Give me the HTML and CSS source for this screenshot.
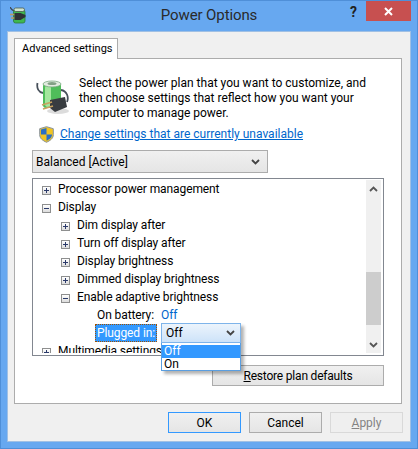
FILE: index.html
```html
<!DOCTYPE html>
<html lang="en">
  <head>
    <meta charset="UTF-8" />
    <meta name="viewport" content="width=device-width, initial-scale=1.0" />
    <title>Power Options</title>
    <link rel="stylesheet" href="styles.css">
  </head>
  <body>
    <div class="window">
      <div class="titlebar">
        <svg class="title-icon" width="17" height="18" viewBox="0 0 17 18">
          <path d="M0 0c1 2 2 3 4 4" fill="none" stroke="#3c4650" stroke-width="1.200" />
          <rect x="3.500" y="3" width="11.500" height="13" rx="2" fill="#3fb84f" stroke="#2f7a3c" stroke-width="0.800" />
          <rect x="4" y="1" width="10.500" height="3.500" rx="1.700" fill="#cfe3cf" stroke="#4a5a4c" stroke-width="0.800" />
          <path d="M0 7.500h5M1 11h4" stroke="#b79a62" stroke-width="1.400" />
          <path d="M4.500 6h6l5 2v2l-5 3h-6z" fill="#2e3236" />
        </svg>
        <span class="title-text">Power Options</span>
        <span class="help">?</span>
        <div class="close">
          <svg width="9" height="9" viewBox="0 0 9 9"><path d="M1 1l7 7M8 1l-7 7" stroke="#fff" stroke-width="2" /></svg>
        </div>
      </div>

      <div class="client">
        <div class="tab">Advanced settings</div>
        <div class="panel">
          <div class="intro">
            <svg class="battery" width="34" height="36" viewBox="0 0 34 36">
              <ellipse cx="22" cy="32" rx="11" ry="3" fill="#dcdcdc" />
              <path d="M1.500 4c-1 5 1 9 5.500 10M25 11c6 1 8 7 6 12" fill="none" stroke="#47505a" stroke-width="1.800" />
              <rect x="7" y="4" width="18" height="25" rx="3" fill="#4fbd5a" />
              <rect x="9" y="6" width="6" height="22" rx="3" fill="#a3e69d" />
              <ellipse cx="16" cy="5" rx="9" ry="3" fill="#e3ebe0" stroke="#7ba881" stroke-width="0.800" />
              <ellipse cx="16" cy="4.500" rx="4.500" ry="1.600" fill="#83a085" />
              <path d="M14 21l15-3 2 10-12 5-5-4z" fill="#383c40" />
              <path d="M6 26l10-3M7 30l10-3" stroke="#c9a25e" stroke-width="1.800" />
            </svg>
            <p class="intro-text">Select the power plan that you want to customize, and then choose settings that reflect how you want your computer to manage power.</p>
          </div>

          <div class="change">
            <svg width="15" height="17" viewBox="0 0 15 17">
              <path d="M7.500.7l6.800 2v6c0 3.700-3 5.800-6.800 7.600C3.700 14.500.7 12.400.7 8.700v-6z" fill="#f2c522" stroke="#8792a0" />
              <path d="M7.500 2v6.500h-5.500V3.400zM7.500 8.500H13c0 3-2.500 4.800-5.500 6.300z" fill="#2a6fc4" />
            </svg>
            <a class="change-link" href="#">Change settings that are currently unavailable</a>
          </div>

          <div class="plan-select">
            <span>Balanced [Active]</span>
            <svg class="chevron" width="9" height="6" viewBox="0 0 9 6"><path d="M1 1l3.500 3.500L8 1" fill="none" stroke="#444" stroke-width="1.800" /></svg>
          </div>

          <div class="tree-wrap">
            <div class="tree">
              <div class="tree-rows">
                <div class="row"><span class="box plus"></span>Processor power management</div>
                <div class="row"><span class="box minus"></span>Display</div>
                <div class="row level1"><span class="box plus"></span>Dim display after</div>
                <div class="row level1"><span class="box plus"></span>Turn off display after</div>
                <div class="row level1"><span class="box plus"></span>Display brightness</div>
                <div class="row level1"><span class="box plus"></span>Dimmed display brightness</div>
                <div class="row level1"><span class="box minus"></span>Enable adaptive brightness</div>
                <div class="row level2">On battery:<span class="value">Off</span></div>
                <div class="row level2"><span class="selected">Plugged in:</span></div>
                <div class="row"><span class="box plus"></span>Multimedia settings</div>
              </div>
              <div class="scrollbar">
                <svg class="arrow-up" width="9" height="6" viewBox="0 0 9 6"><path d="M1 5l3.500-3.500L8 5" fill="none" stroke="#555" stroke-width="1.800" /></svg>
                <div class="track"><div class="thumb"></div></div>
                <svg class="arrow-down" width="9" height="6" viewBox="0 0 9 6"><path d="M1 1l3.500 3.500L8 1" fill="none" stroke="#555" stroke-width="1.800" /></svg>
              </div>
            </div>

            <!-- lista aberta por cima da arvore -->
            <div class="combo">
              <div class="combo-head">
                <span>Off</span>
                <svg width="9" height="6" viewBox="0 0 9 6"><path d="M1 1l3.500 3.500L8 1" fill="none" stroke="#444" stroke-width="1.800" /></svg>
              </div>
              <div class="combo-list">
                <div class="option active">Off</div>
                <div class="option">On</div>
              </div>
            </div>
          </div>

          <div class="restore-row">
            <button class="btn restore"><u>R</u>estore plan defaults</button>
          </div>
        </div>

        <div class="actions">
          <button class="btn default">OK</button>
          <button class="btn">Cancel</button>
          <button class="btn disabled"><u>A</u>pply</button>
        </div>
      </div>
    </div>
  </body>
</html>
```

FILE: styles.css
```css
html,
body {
  margin: 0;
  padding: 0;
}

body {
  font-family: "Roboto", "Open Sans", sans-serif;
  font-size: 12px;
  color: #000;
  background-color: #67a8f0;
}

.window {
  box-sizing: border-box;
  width: 418px;
  height: 449px;
  padding: 0 6px;
  border: 1px solid #4f8fd8;
  background-color: #67a8f0;
  display: flex;
  flex-direction: column;
}

.titlebar {
  height: 30px;
  flex: none;
  display: flex;
  align-items: flex-start;
  position: relative;
}

.title-icon {
  margin: 6px 0 0 3px;
}

.title-text {
  position: absolute;
  left: 0;
  right: 0;
  top: 4px;
  text-align: center;
  font-size: 15px;
  line-height: 20px;
  letter-spacing: -0.1px;
  color: #2a2a2a;
}

.help {
  position: absolute;
  left: 343px;
  top: 1px;
  font-size: 14px;
  font-weight: bold;
  line-height: 20px;
  color: #222;
}

.close {
  position: absolute;
  right: 0;
  top: 0;
  width: 45px;
  height: 20px;
  background-color: #c75050;
  display: flex;
  align-items: center;
  justify-content: center;
}

.client {
  box-sizing: border-box;
  height: 411px;
  flex: none;
  padding: 6px 8px 0 6px;
  background-color: #f0f0f0;
  border: 1px solid #a0c0e4;
}

.tab {
  box-sizing: border-box;
  width: 104px;
  height: 21px;
  margin-bottom: -1px;
  padding-left: 7px;
  font-size: 11px;
  line-height: 20px;
  white-space: nowrap;
  background-color: #fff;
  border: 1px solid #acacac;
  border-bottom: none;
  position: relative;
}

.panel {
  box-sizing: border-box;
  height: 346px;
  background-color: #fff;
  border: 1px solid #acacac;
  padding: 17px 17px 0 17px;
}

.intro {
  display: flex;
}

.battery {
  flex: none;
  margin: 3px 0 0 4px;
}

.intro-text {
  margin: 0 0 0 9px;
  line-height: 15px;
  width: 300px;
}

.change {
  display: flex;
  align-items: center;
  height: 18px;
  margin-top: 4px;
  padding-left: 7px;
}

.change-link {
  margin-left: 6px;
  color: #0066cc;
  text-decoration: underline;
}

.plan-select {
  box-sizing: border-box;
  width: 236px;
  height: 23px;
  margin-top: 7px;
  padding: 0 7px 0 3px;
  border: 1px solid #acacac;
  background: linear-gradient(#f0f0f0, #e5e5e5);
  display: flex;
  align-items: center;
  justify-content: space-between;
}

.tree-wrap {
  position: relative;
  margin-top: 5px;
}

.tree {
  box-sizing: border-box;
  width: 352px;
  height: 178px;
  border: 1px solid #828790;
  display: flex;
  overflow: hidden;
  padding: 1px 2px 2px 0;
  background-color: #fff;
}

.tree-rows {
  flex: 1;
  overflow: hidden;
  letter-spacing: -0.1px;
}

.row {
  height: 18px;
  line-height: 18px;
  padding-left: 9px;
  display: flex;
  align-items: center;
  white-space: nowrap;
}

.level1 {
  padding-left: 28px;
}

.level2 {
  padding-left: 64px;
}

.box {
  box-sizing: border-box;
  width: 9px;
  height: 9px;
  margin: 2px 7px 0 0;
  flex: none;
  border: 1px solid #8e8f8f;
  background: linear-gradient(#fff, #dcdcdc);
  position: relative;
}

.plus::before,
.minus::before {
  content: "";
  position: absolute;
  left: 1px;
  top: 3px;
  width: 5px;
  height: 1px;
  background-color: #2b3a6a;
}

.plus::after {
  content: "";
  position: absolute;
  left: 3px;
  top: 1px;
  width: 1px;
  height: 5px;
  background-color: #2b3a6a;
}

.value {
  margin-left: 7px;
  color: #0066cc;
}

.selected {
  margin-left: -2px;
  padding: 0 2px;
  height: 18px;
  line-height: 18px;
  color: #fff;
  background-color: #3399ff;
  outline: 1px dotted #a05000;
  outline-offset: -1px;
}

.scrollbar {
  box-sizing: border-box;
  width: 15px;
  flex: none;
  background-color: #f0f0f0;
  display: flex;
  flex-direction: column;
  align-items: center;
}

.scrollbar svg {
  flex: none;
}

.arrow-up {
  margin: 6px 0 8px;
}

.arrow-down {
  margin: 8px 0 5px;
}

.track {
  flex: 1;
  width: 15px;
  position: relative;
}

.thumb {
  position: absolute;
  left: 0;
  right: 0;
  top: 72px;
  height: 53px;
  background-color: #cdcdcd;
}

.combo {
  position: absolute;
  left: 129px;
  top: 145px;
  width: 80px;
  box-shadow: 3px 3px 3px rgba(0, 0, 0, 0.3);
}

.combo-head {
  box-sizing: border-box;
  height: 20px;
  padding: 0 5px 0 4px;
  border: 1px solid #7eb4ea;
  background: linear-gradient(#ecf4fc, #cde3f9);
  display: flex;
  align-items: center;
  justify-content: space-between;
}

.combo-list {
  box-sizing: border-box;
  height: 28px;
  padding-top: 2px;
  border: 1px solid #5a9ee0;
  border-top: none;
  background-color: #fff;
}

.option {
  height: 13px;
  line-height: 13px;
  padding-left: 2px;
}

.active {
  color: #fff;
  background-color: #3399ff;
}

.restore-row {
  display: flex;
  margin: 9px 0 0 180px;
}

.btn {
  box-sizing: border-box;
  width: 73px;
  height: 21px;
  padding: 0;
  font-family: inherit;
  font-size: 12px;
  color: #000;
  border: 1px solid #acacac;
  background: linear-gradient(#f0f0f0, #e5e5e5);
}

.restore {
  width: 173px;
  letter-spacing: -0.2px;
}

.actions {
  display: flex;
  justify-content: flex-end;
  gap: 8px;
  margin: 8px -1px 0 0;
}

.default {
  border: 1px solid #3399ff;
}

.disabled {
  color: #838383;
  border-color: #d9d9d9;
  background: #efefef;
}
```
